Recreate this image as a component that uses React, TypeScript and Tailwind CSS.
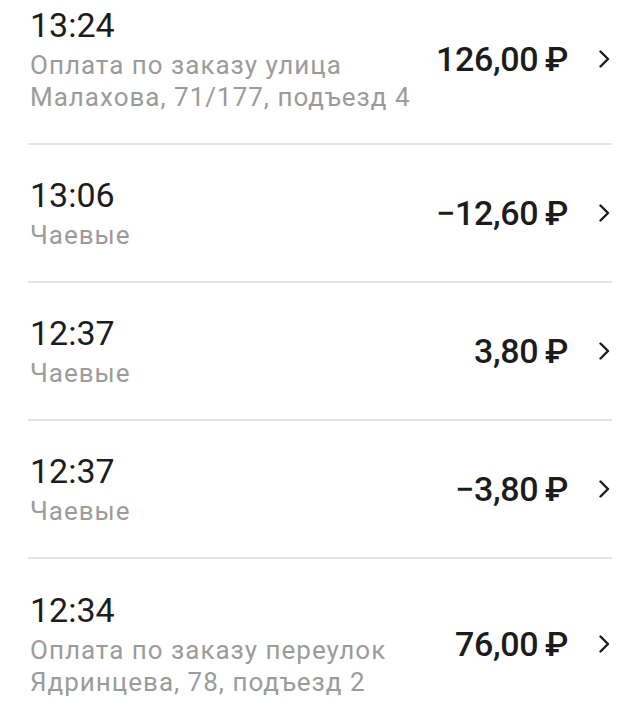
const rows = [
    { time: '13:24', text: ['Оплата по заказу улица', 'Малахова, 71/177, подъезд 4'], amount: '126,00' },
    { time: '13:06', text: ['Чаевые'], amount: '\u221212,60' },
    { time: '12:37', text: ['Чаевые'], amount: '3,80' },
    { time: '12:37', text: ['Чаевые'], amount: '\u22123,80' },
    { time: '12:34', text: ['Оплата по заказу переулок', 'Ядринцева, 78, подъезд 2'], amount: '76,00' },
]

const Chevron = () => (
    <svg width="16" height="18" viewBox="0 0 16 18" fill="none" className="shrink-0">
        <path d="M4.5 1.5 L12 9 L4.5 16.5" stroke="#1c1c1c" strokeWidth="2.4" strokeLinecap="round" strokeLinejoin="round" />
    </svg>
)

const Row = ({ row, last }: any) => {
    return (
        <div className={`${row.text.length > 1 ? 'h-[170px]' : 'h-[138px]'} ${last ? '' : 'border-b-2 border-[#e4e4e4]'} mx-[28px] flex items-center`}>
            <div className="flex-1 min-w-0 pl-[2px]">
                <div className="text-[34px] leading-[40px] text-[#1c1c1c]">{row.time}</div>
                <div className="mt-[4px] text-[26px] leading-[32px] tracking-[1px] text-[#9b9b9b]">
                    {row.text.map((t: string, i: number) => (
                        <div key={i}>{t}</div>
                    ))}
                </div>
            </div>
            <div className="flex items-center">
                <span className="text-[34px] font-medium text-[#1c1c1c] tracking-[-0.3px]">{row.amount}&thinsp;₽</span>
                <span className="ml-[28px]"><Chevron /></span>
            </div>
        </div>
    )
}

export default function App() {
    return (
        <div className="w-[640px] h-[728px] overflow-hidden bg-white" style={{ fontFamily: 'Roboto, "Noto Sans", sans-serif' }}>
            <div className="mt-[-25px]">
                {rows.map((row, index) => (
                    <Row key={row.time + index} row={row} last={index === rows.length - 1} />
                ))}
            </div>
        </div>
    )
}
